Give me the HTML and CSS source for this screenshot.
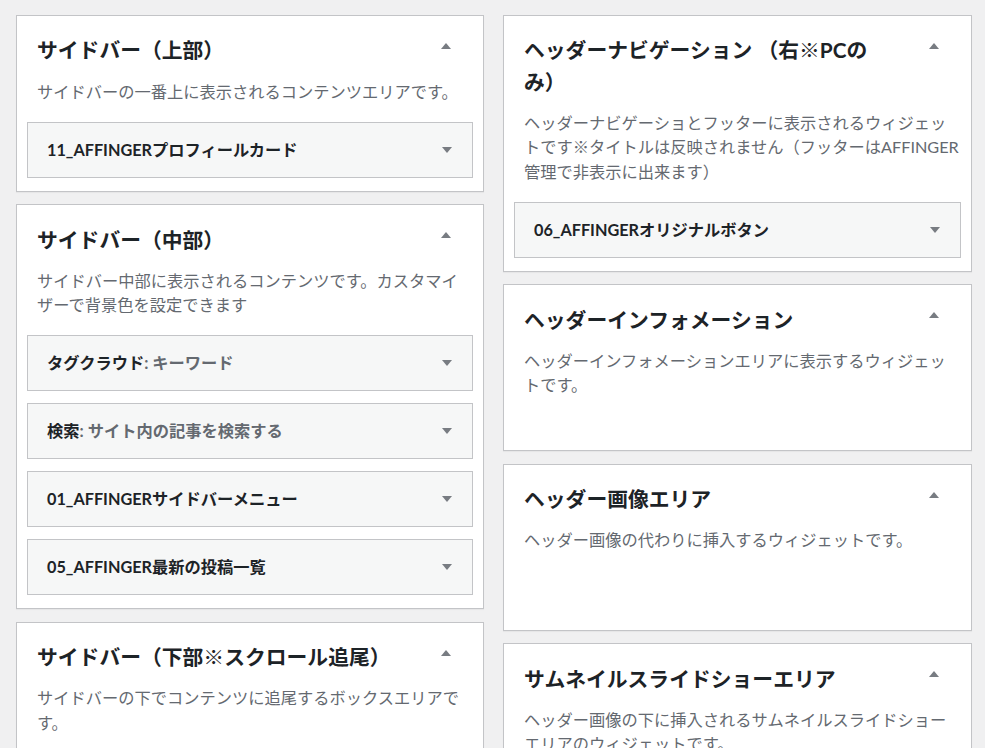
FILE: index.html
```html
<!DOCTYPE html>
<html lang="ja">
<head>
<meta charset="utf-8">
<title>ウィジェット</title>
<link rel="stylesheet" href="styles.css">
</head>
<body>
<div class="page">
  <div class="col col-left">
    <section class="area">
      <div class="area-head">
        <h2 class="area-title">サイドバー（上部）</h2>
        <span class="toggle toggle-up"></span>
      </div>
      <p class="area-desc">サイドバーの一番上に表示されるコンテンツエリアです。</p>
      <div class="widgets">
        <div class="widget">
          <h3 class="widget-title">11_AFFINGERプロフィールカード</h3>
          <span class="toggle toggle-down"></span>
        </div>
      </div>
    </section>

    <section class="area">
      <div class="area-head">
        <h2 class="area-title">サイドバー（中部）</h2>
        <span class="toggle toggle-up"></span>
      </div>
      <p class="area-desc">サイドバー中部に表示されるコンテンツです。カスタマイザーで背景色を設定できます</p>
      <div class="widgets">
        <div class="widget">
          <h3 class="widget-title">タグクラウド<span class="sub">: キーワード</span></h3>
          <span class="toggle toggle-down"></span>
        </div>
        <div class="widget">
          <h3 class="widget-title">検索<span class="sub">: サイト内の記事を検索する</span></h3>
          <span class="toggle toggle-down"></span>
        </div>
        <div class="widget">
          <h3 class="widget-title">01_AFFINGERサイドバーメニュー</h3>
          <span class="toggle toggle-down"></span>
        </div>
        <div class="widget">
          <h3 class="widget-title">05_AFFINGER最新の投稿一覧</h3>
          <span class="toggle toggle-down"></span>
        </div>
      </div>
    </section>

    <section class="area">
      <div class="area-head">
        <h2 class="area-title">サイドバー（下部※スクロール追尾）</h2>
        <span class="toggle toggle-up"></span>
      </div>
      <p class="area-desc">サイドバーの下でコンテンツに追尾するボックスエリアです。</p>
    </section>
  </div>

  <div class="col col-right">
    <section class="area">
      <div class="area-head">
        <h2 class="area-title">ヘッダーナビゲーション （右※PCのみ）</h2>
        <span class="toggle toggle-up"></span>
      </div>
      <p class="area-desc">ヘッダーナビゲーショとフッターに表示されるウィジェットです※タイトルは反映されません（フッターはAFFINGER管理で非表示に出来ます）</p>
      <div class="widgets">
        <div class="widget">
          <h3 class="widget-title">06_AFFINGERオリジナルボタン</h3>
          <span class="toggle toggle-down"></span>
        </div>
      </div>
    </section>

    <section class="area">
      <div class="area-head">
        <h2 class="area-title">ヘッダーインフォメーション</h2>
        <span class="toggle toggle-up"></span>
      </div>
      <p class="area-desc">ヘッダーインフォメーションエリアに表示するウィジェットです。</p>
    </section>

    <section class="area">
      <div class="area-head">
        <h2 class="area-title">ヘッダー画像エリア</h2>
        <span class="toggle toggle-up"></span>
      </div>
      <p class="area-desc">ヘッダー画像の代わりに挿入するウィジェットです。</p>
    </section>

    <section class="area">
      <div class="area-head">
        <h2 class="area-title">サムネイルスライドショーエリア</h2>
        <span class="toggle toggle-up"></span>
      </div>
      <p class="area-desc">ヘッダー画像の下に挿入されるサムネイルスライドショーエリアのウィジェットです。</p>
    </section>
  </div>
</div>
</body>
</html>
```

FILE: styles.css
```css
* {
  box-sizing: border-box;
}

body {
  margin: 0;
  background: #f0f0f1;
  font-family: "Lato", "Noto Sans CJK JP", sans-serif;
  overflow: hidden;
}

.page {
  display: flex;
  align-items: flex-start;
  gap: 19px;
  padding: 15px 0 0 16px;
}

.col {
  display: flex;
  flex-direction: column;
  gap: 12.5px;
}

.col-left {
  width: 468px;
}

.col-right {
  width: 469px;
}

.area {
  background: #fff;
  border: 1px solid #c3c4c7;
  box-shadow: 0 1px 1px rgba(0, 0, 0, 0.04);
  padding-bottom: 13px;
  min-height: 167px;
}

.area-head {
  display: flex;
  align-items: flex-start;
  justify-content: space-between;
  padding: 18.4px 32px 0 20px;
}

.area-title {
  margin: 0;
  max-width: 358px;
  font-size: 20.8px;
  line-height: 1.5;
  font-weight: 700;
  color: #1d2327;
}

.toggle {
  flex: none;
  width: 0;
  height: 0;
  border-left: 5px solid transparent;
  border-right: 5px solid transparent;
}

.toggle-up {
  border-bottom: 6px solid #787c82;
  margin-top: 8.6px;
}

.toggle-down {
  border-top: 6px solid #787c82;
}

.area-desc {
  margin: 14px 0 0;
  padding: 0 12px 0 20px;
  font-size: 16.25px;
  line-height: 1.5;
  color: #646970;
}

.widgets {
  display: flex;
  flex-direction: column;
  gap: 12px;
  padding: 17.8px 10px 0;
}

.widget {
  display: flex;
  align-items: center;
  justify-content: space-between;
  min-height: 56px;
  padding: 0 20px 0 19px;
  background: #f6f7f7;
  border: 1px solid #c3c4c7;
}

.widget-title {
  margin: 0;
  font-size: 16.25px;
  line-height: 1.5;
  font-weight: 700;
  color: #1d2327;
}

.widget-title .sub {
  color: #646970;
}
```
